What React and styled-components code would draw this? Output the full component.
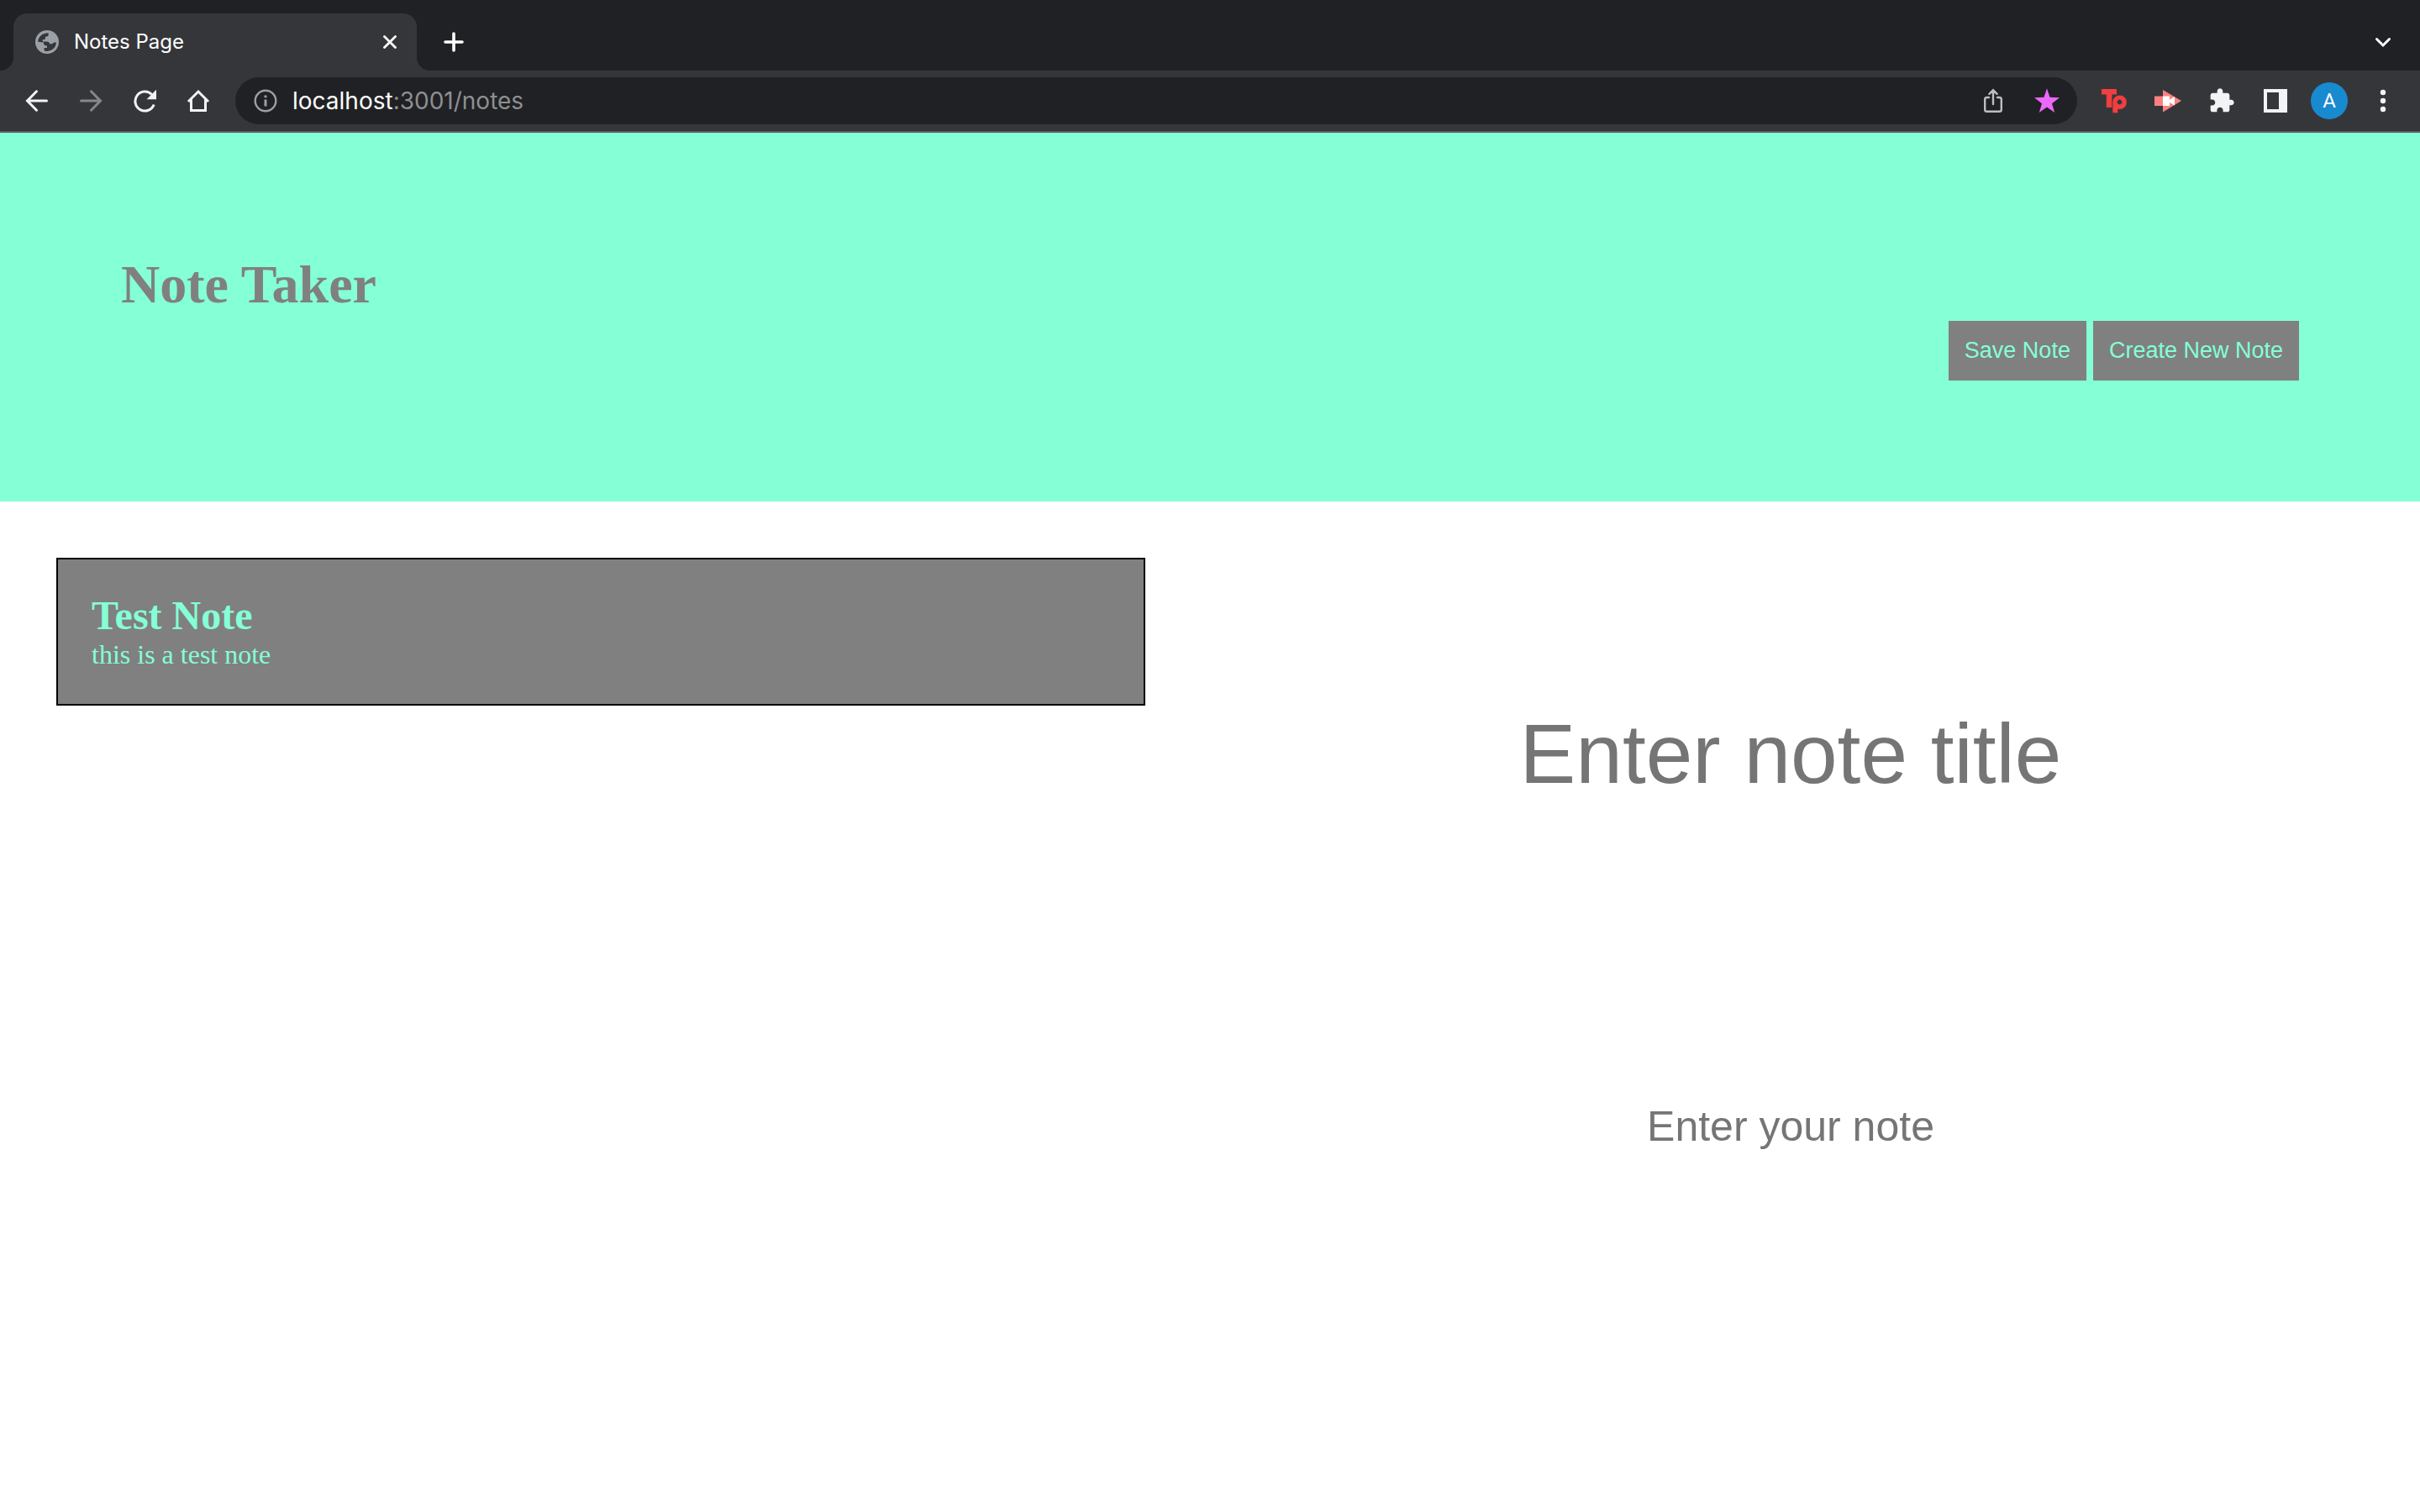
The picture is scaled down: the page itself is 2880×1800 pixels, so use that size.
import React, { useState } from "react";
import styled, { createGlobalStyle } from "styled-components";

const GlobalStyle = createGlobalStyle`
  *, *::before, *::after { box-sizing: border-box; }
  html { background: #ffffff; }
  body { margin: 0; }
  h1, h2, p, ul { margin: 0; padding: 0; }
  button, input, textarea { margin: 0; border: 0; padding: 0; background: none; }
`;

const SANS = `"Liberation Sans", Arial, sans-serif`;
const SERIF = `"Liberation Serif", "Times New Roman", serif`;
const UI = `Inter, Roboto, sans-serif`;
const MINT = "#84ffd6";
const GRAY = "#808080";

const Screen = styled.div`
  display: flex;
  flex-direction: column;
  min-height: 100vh;
  background: #ffffff;
`;

/* Browser frame */

const TabStrip = styled.div`
  display: flex;
  align-items: center;
  height: 84px;
  padding: 16px 12px 0 16px;
  background: #202124;
`;

const Tab = styled.div`
  position: relative;
  display: flex;
  align-items: center;
  width: 480px;
  height: 68px;
  margin-right: 12px;
  padding: 0 20px 0 26px;
  border-radius: 16px 16px 0 0;
  background: #35363a;
  color: #ffffff;

  &::before,
  &::after {
    content: "";
    position: absolute;
    bottom: 0;
    width: 16px;
    height: 16px;
  }
  &::before {
    right: 100%;
    background: radial-gradient(circle at 0 0, transparent 16px, #35363a 16px);
  }
  &::after {
    left: 100%;
    background: radial-gradient(circle at 100% 0, transparent 16px, #35363a 16px);
  }
`;

const TabTitle = styled.span`
  flex: 1;
  margin-left: 18px;
  font: 400 24px/32px ${UI};
`;

const TabClose = styled.button`
  display: grid;
  place-items: center;
  width: 24px;
  height: 32px;
  color: #ffffff;
`;

const Toolbar = styled.div`
  display: flex;
  align-items: center;
  height: 74px;
  padding: 0 12px;
  border-bottom: 2px solid #5b5c5f;
  background: #35363a;
`;

const IconButton = styled.button`
  display: grid;
  place-items: center;
  flex: none;
  width: 64px;
  height: 56px;
  margin-left: ${(p) => (p.$end ? "auto" : "0")};
  color: ${(p) => p.$color || "#f1f3f4"};
`;

const AddressBar = styled.div`
  display: flex;
  align-items: center;
  flex: 1;
  height: 56px;
  margin: 0 12px;
  padding: 0 4px;
  border-radius: 28px;
  background: #202124;
`;

const Address = styled.a`
  flex: 1;
  color: #8e8f91;
  font: 400 28px/36px ${UI};
  text-decoration: none;
`;

const Host = styled.span`
  color: #ffffff;
`;

const Avatar = styled.span`
  display: grid;
  place-items: center;
  width: 44px;
  height: 44px;
  border-radius: 50%;
  background: #188ad0;
  color: #ffffff;
  font: 400 24px/44px Roboto, sans-serif;
`;

/* Notes page */

const Header = styled.header`
  padding: 144px 5%;
  background: ${MINT};
`;

const Title = styled.h1`
  color: ${GRAY};
  font: 700 64px/74px ${SERIF};
`;

const Actions = styled.div`
  display: flex;
  justify-content: flex-end;
  gap: 8px;
  margin-top: 6px;
`;

const ActionButton = styled.button`
  padding: 20px 19px;
  background: ${GRAY};
  color: ${MINT};
  font: 400 27px/31px ${SANS};
`;

const Main = styled.main`
  display: flex;
  align-items: flex-start;
  gap: 86px;
  padding: 67px;
`;

const NoteList = styled.ul`
  flex: none;
  width: 45vw;
  list-style: none;
`;

const NoteCard = styled.li`
  padding: 40px;
  border: 2px solid #000000;
  background: ${GRAY};
  color: ${MINT};
`;

const NoteTitle = styled.h2`
  font: 700 48px/54px ${SERIF};
`;

const NoteText = styled.p`
  font: 400 32px/38px ${SERIF};
`;

const Editor = styled.form`
  display: flex;
  flex: 1;
  flex-direction: column;
  min-width: 0;
`;

const TitleField = styled.input`
  width: 100%;
  padding: 175px 0;
  font: 400 100px/116px ${SANS};
  text-align: center;
  outline: none;
  &::placeholder { color: #757575; }
`;

const TextField = styled.textarea`
  width: 100%;
  padding: 182px 0;
  resize: none;
  overflow: hidden;
  font: 400 50px/58px ${SANS};
  text-align: center;
  outline: none;
  &::placeholder { color: #757575; }
`;

/* Icons */

const Icon = ({ size, box = size, children, ...rest }) => (
  <svg
    width={size}
    height={size}
    viewBox={`0 0 ${box} ${box}`}
    fill="none"
    stroke="currentColor"
    strokeWidth="3.6"
    strokeLinecap="round"
    aria-hidden="true"
    {...rest}
  >
    {children}
  </svg>
);

const GlobeIcon = () => (
  <Icon size={28} stroke="none">
    <circle cx="14" cy="14" r="14" fill="#9aa0a6" />
    <path
      fill="#35363a"
      d="M3.2 13.8C3.4 8 8 3.3 15.600 3.200V5.600C15.600 7 14.600 7.600 13 7.600H12V9.400C12 10.500 11.200 11 10 11H8.800V13.400H13.600C15.800 13.400 17 14.400 17 16.200H19.400C21 16.200 21.600 15.400 22 14.600H24.900C24.600 20.600 20 24.900 14.200 24.900C12 24.900 10.600 24.600 10.600 23.400V21H14V18.600C11.600 18.600 10 17.600 10 15.600V14.400Z"
    />
  </Icon>
);

const CloseIcon = () => (
  <Icon size={16} strokeWidth="2.8">
    <path d="M1.500 1.500L14.500 14.500M14.500 1.500L1.500 14.500" />
  </Icon>
);

const PlusIcon = () => (
  <Icon size={24} stroke="#ffffff">
    <path d="M12 2V22M2 12H22" />
  </Icon>
);

const ChevronIcon = () => (
  <Icon size={20} stroke="#ffffff" strokeWidth="3">
    <path d="M2.500 6.500L10 14L17.500 6.500" />
  </Icon>
);

const BackIcon = () => (
  <Icon size={28} strokeWidth="3">
    <path d="M25.500 14H2.800M13.500 2.800L2.500 14L13.500 25.200" />
  </Icon>
);

const ForwardIcon = () => (
  <Icon size={28} strokeWidth="3">
    <path d="M2.500 14H25.200M14.500 2.800L25.500 14L14.500 25.200" />
  </Icon>
);

const ReloadIcon = () => (
  <Icon size={28} strokeWidth="3" strokeLinecap="butt">
    <path d="M25.200 18.500A11.500 11.500 0 1 1 22.600 6.400" />
    <path d="M28 0.800V12.200H16.600Z" fill="currentColor" stroke="none" />
  </Icon>
);

const HomeIcon = () => (
  <Icon size={28} strokeWidth="3" strokeLinecap="butt">
    <path d="M2 15L14 3L26 15M5.500 12V25.500H22.500V12" />
  </Icon>
);

const InfoIcon = () => (
  <Icon size={28} strokeWidth="2.400" strokeLinecap="butt">
    <circle cx="14" cy="14" r="12.300" />
    <path d="M14 12.600V20.600M14 7.400V10.200" strokeWidth="3" />
  </Icon>
);

const ShareIcon = () => (
  <Icon size={30} strokeWidth="2.400">
    <path d="M10 11H7.500Q5.200 11 5.200 13.300V25.500Q5.200 27.800 7.500 27.800H22.500Q24.800 27.800 24.800 25.500V13.300Q24.800 11 22.500 11H20M15 19V2.500M10.400 6.800L15 2.200L19.600 6.800" />
  </Icon>
);

const StarIcon = () => (
  <Icon size={30} stroke="none">
    <path
      fill="currentColor"
      d="M15 0.300L18.500 10.800L30 11.200L21 18.200L24.200 29L15 22.600L5.800 29L9 18.200L0 11.200L11.500 10.800Z"
    />
  </Icon>
);

const TpIcon = () => (
  <Icon size={30} stroke="none" fill="#ef3f3f">
    <path d="M0 1H18V7.600H12.500V23H5.800V7.600H0Z" />
    <path
      fillRule="evenodd"
      stroke="#35363a"
      strokeWidth="0.6"
      d="M13 29.500V16.500A8.600 8.600 0 1 1 19.600 25.100V29.500ZM21.500 13.900A2.600 2.600 0 1 0 21.500 19.100A2.600 2.600 0 1 0 21.500 13.900Z"
    />
  </Icon>
);

const RecorderIcon = () => (
  <Icon size={32} stroke="none">
    <path fill="#ff8080" d="M0 10.500H10V3L32 16L10 29.500V22H0Z" />
    <path fill="#ffffff" d="M10 10.500H18V14.800L24 11V21.500L18 18V22H10Z" />
  </Icon>
);

const PuzzleIcon = () => (
  <Icon size={32} box={24} stroke="none" fill="currentColor">
    <path d="M20.500 11H19V7c0-1.100-.900-2-2-2h-4V3.500C13 2.120 11.880 1 10.500 1S8 2.120 8 3.500V5H4c-1.100 0-1.990.900-1.990 2v3.800H3.500c1.490 0 2.700 1.210 2.700 2.700s-1.210 2.700-2.700 2.700H2V20c0 1.100.900 2 2 2h3.800v-1.500c0-1.490 1.210-2.700 2.700-2.700 1.490 0 2.700 1.210 2.700 2.700V22H17c1.100 0 2-.900 2-2v-4h1.500c1.380 0 2.500-1.120 2.500-2.500S21.880 11 20.500 11z" />
  </Icon>
);

const SidePanelIcon = () => (
  <Icon size={28} stroke="none" fill="currentColor">
    <path fillRule="evenodd" d="M0 0H28V28H0ZM4 4V24H18V4Z" />
  </Icon>
);

const MenuIcon = () => (
  <Icon size={28} stroke="none" fill="currentColor">
    <circle cx="14" cy="4" r="3.200" />
    <circle cx="14" cy="14" r="3.200" />
    <circle cx="14" cy="24" r="3.200" />
  </Icon>
);

const notes = [{ title: "Test Note", text: "this is a test note" }];

export default function App() {
  const [title, setTitle] = useState("");
  const [text, setText] = useState("");

  const clear = () => {
    setTitle("");
    setText("");
  };

  return (
    <Screen>
      <GlobalStyle />
      <TabStrip>
        <Tab>
          <GlobeIcon />
          <TabTitle>Notes Page</TabTitle>
          <TabClose aria-label="Close tab"><CloseIcon /></TabClose>
        </Tab>
        <IconButton aria-label="New tab"><PlusIcon /></IconButton>
        <IconButton aria-label="Search tabs" $end><ChevronIcon /></IconButton>
      </TabStrip>
      <Toolbar>
        <IconButton aria-label="Back"><BackIcon /></IconButton>
        <IconButton aria-label="Forward" $color="#86878a"><ForwardIcon /></IconButton>
        <IconButton aria-label="Reload"><ReloadIcon /></IconButton>
        <IconButton aria-label="Home"><HomeIcon /></IconButton>
        <AddressBar>
          <IconButton aria-label="Site information" $color="#9aa0a6"><InfoIcon /></IconButton>
          <Address href="/notes"><Host>localhost</Host>:3001/notes</Address>
          <IconButton aria-label="Share" $color="#bdbebf"><ShareIcon /></IconButton>
          <IconButton aria-label="Bookmark" $color="#ec68fa"><StarIcon /></IconButton>
        </AddressBar>
        <IconButton aria-label="Tp extension"><TpIcon /></IconButton>
        <IconButton aria-label="Recorder extension"><RecorderIcon /></IconButton>
        <IconButton aria-label="Extensions"><PuzzleIcon /></IconButton>
        <IconButton aria-label="Side panel"><SidePanelIcon /></IconButton>
        <IconButton aria-label="Profile"><Avatar>A</Avatar></IconButton>
        <IconButton aria-label="Menu"><MenuIcon /></IconButton>
      </Toolbar>

      <Header>
        <Title>Note Taker</Title>
        <Actions>
          <ActionButton type="submit" form="editor">Save Note</ActionButton>
          <ActionButton type="button" onClick={clear}>Create New Note</ActionButton>
        </Actions>
      </Header>
      <Main>
        <NoteList>
          {notes.map((note) => (
            <NoteCard key={note.title}>
              <NoteTitle>{note.title}</NoteTitle>
              <NoteText>{note.text}</NoteText>
            </NoteCard>
          ))}
        </NoteList>
        <Editor id="editor" onSubmit={(e) => e.preventDefault()}>
          <TitleField
            aria-label="Note title"
            placeholder="Enter note title"
            value={title}
            onChange={(e) => setTitle(e.target.value)}
          />
          <TextField
            aria-label="Note text"
            placeholder="Enter your note"
            rows={1}
            value={text}
            onChange={(e) => setText(e.target.value)}
          />
        </Editor>
      </Main>
    </Screen>
  );
}
